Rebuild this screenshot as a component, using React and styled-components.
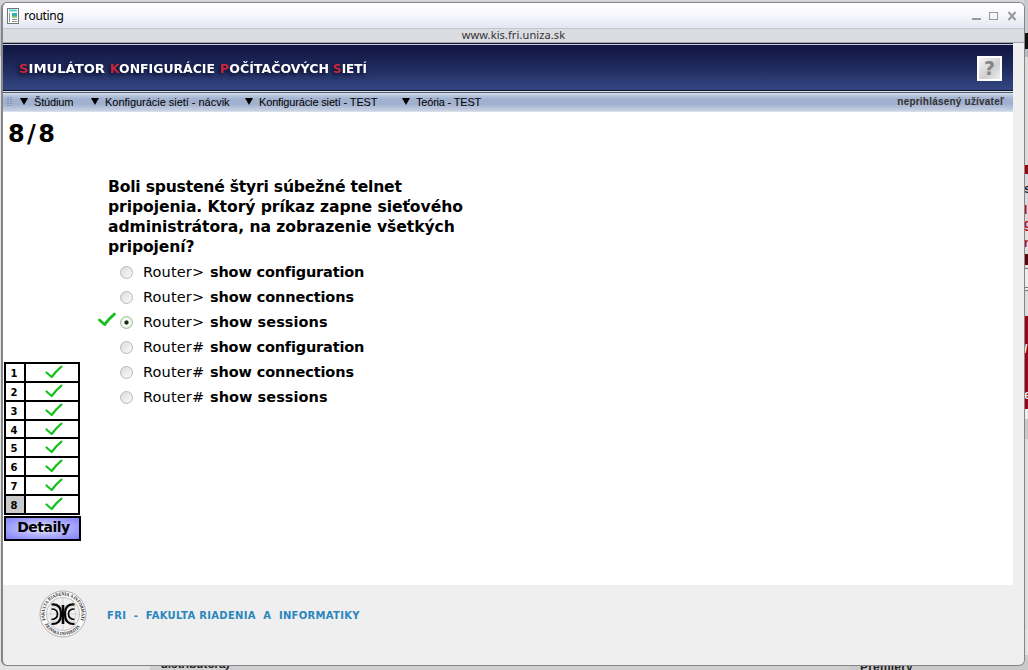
import React from "react";
import styled, { createGlobalStyle } from "styled-components";

const Global = createGlobalStyle`
  * { box-sizing: border-box; }
  html, body { margin: 0; width: 1028px; height: 670px; overflow: hidden; }
  body { background: #c9cace; font-family: "Noto Sans", sans-serif; color: #000; }
`;

const Desktop = styled.div`
  position: relative; width: 1028px; height: 670px; overflow: hidden;
  padding: 2px 3px 4px 1px;
  background: linear-gradient(#d4d5d9 0 4px, #c3c4ca 12px 56px, #e3e3e3 57px);
`;
const BackPage = styled.div`
  position: absolute; right: 0; top: 0; width: 4px; height: 670px; overflow: hidden;
  display: flex; flex-direction: column;
`;
const Strip = styled.div`
  flex: none; height: ${(p) => p.$h}px; background: ${(p) => p.$bg};
  color: ${(p) => p.$fg || "#000"}; font: bold 12px/${(p) => p.$h}px "Liberation Sans", sans-serif;
  overflow: hidden; white-space: nowrap;
`;
const BackFoot = styled.div`
  position: absolute; left: 0; right: 0; bottom: 0; height: 15px; overflow: hidden;
  display: flex; background: #cfcfcf;
`;
const FootText = styled.div`
  width: ${(p) => p.$w}px; flex: none; padding-left: ${(p) => p.$pad}px; background: ${(p) => p.$bg};
  font: ${(p) => p.$style} bold 12px/15px "Liberation Sans", sans-serif; color: #222;
  padding-top: ${(p) => p.$top}px; letter-spacing: ${(p) => p.$ls}px; white-space: nowrap;
`;

const Window = styled.div`
  position: relative; width: 1024px; height: 664px;
  display: flex; flex-direction: column; overflow: hidden;
  border: 1px solid #84868a; border-left-width: 2px; border-radius: 6px;
  background: #efefef;
`;
const TitleBar = styled.header`
  height: 26px; flex: none; display: flex; align-items: center; padding: 0 7px 0 4px;
  background: linear-gradient(#fff 0, #f8f8fc 45%, #e3e6f3 100%);
  font-size: 12px; border-bottom: 1px solid #c5c7cf;
`;
const WindowTitle = styled.span`
  flex: 1; margin-left: 5px; letter-spacing: -0.3px; line-height: 16px;
`;
const Controls = styled.svg` width: 46px; height: 16px; display: block; `;
const AddressBar = styled.div`
  height: 14px; flex: none; background: #dadce2; text-align: center;
  font-size: 11px; line-height: 12px; letter-spacing: 0.1px; color: #333;
  border-bottom: 1px solid #a5a7ae;
`;
const Body = styled.div`
  flex: 1; min-height: 0; display: flex; flex-direction: column; width: 1010px;
`;
const Banner = styled.div`
  height: 48px; flex: none; display: flex; align-items: center; justify-content: space-between;
  padding: 0 11px 0 10px;
  border-top: 1px solid #15182c; border-bottom: 1px solid #0d1020;
  background: linear-gradient(#c8ccdc 0 1px, #101540 1px, #1d2759 45%, #344783 100%);
`;
const Logo = styled.svg`
  width: 370px; height: 30px; display: block; margin-top: 2px;
  font-family: "DejaVu Sans", sans-serif; font-weight: bold; font-size: 11.6px;
  filter: drop-shadow(-2px 2px 2px #060924);
`;
const HelpButton = styled.button`
  width: 25px; height: 25px; padding: 0; margin-top: 2px; border: 2px solid #fff;
  background: linear-gradient(135deg, #f4f4f4, #cfcfcf 60%, #f0f0f0); color: #858585;
  font: bold 19px/20px "DejaVu Sans", sans-serif; text-align: center;
`;
const MenuBar = styled.nav`
  height: 21px; flex: none; display: flex; align-items: center; padding: 1px 9px 0 4px;
  border-bottom: 1px solid #d9dfea;
  background: linear-gradient(#dfe5f0 0 1px, #50596f 1px 2px, #d2dbea 2px 3px, #bccae0 4px, #a1b0ce 8px, #a1b0ce 13px, #c9d3e5 20px);
  font: 11px/16px "Liberation Sans", sans-serif;
`;
const Grip = styled.svg`
  width: 5px; height: 10px; margin-right: 8px; flex: none;
`;
const MenuItem = styled.span`
  display: flex; align-items: center; width: ${(p) => p.$w}px; white-space: nowrap;
  letter-spacing: ${(p) => p.$ls || 0}px;
  &::before {
    content: ""; margin-right: 6px; border: 4px solid transparent;
    border-top: 7px solid #000; border-bottom: 0;
  }
`;
const User = styled.span`
  margin-left: auto; font-weight: bold; font-size: 10px; letter-spacing: 0.21px; color: #333;
`;
const Quiz = styled.main`
  height: 473px; flex: none; background: #fff; padding: 9px 0 0 1px;
`;
const Counter = styled.h1`
  margin: 0 0 0 4px; height: 56px; font: bold 24px/26px "DejaVu Sans", sans-serif; letter-spacing: 2.4px;
`;
const Question = styled.h2`
  margin: 0 0 0 104px; width: 380px; font: bold 15.6px/20px "DejaVu Sans", sans-serif;
`;
const QuestionLine = styled.span`
  display: block; letter-spacing: ${(p) => p.$ls}px; white-space: nowrap;
`;
const Options = styled.ul`
  list-style: none; margin: 2px 0 0 94px; padding: 0; height: 103px;
`;
const Option = styled.li`
  height: 25px; display: flex; align-items: center; font: 14.5px/20px "DejaVu Sans", sans-serif; white-space: pre;
`;
const Mark = styled.span` width: 22px; height: 19px; flex: none; `;
const Radio = styled.span`
  width: 13px; height: 13px; flex: none; margin: 1px 10px 0 0; border-radius: 50%;
  border: 1px solid ${(p) => (p.$on ? "#9ac092" : "#b8b8b8")};
  background: ${(p) => (p.$on
    ? "radial-gradient(circle, #1d261b 0 1.6px, #fff 2.6px, #e5efe2 5px)"
    : "linear-gradient(135deg, #dcdcdc, #fafafa)")};
`;
const Command = styled.span` width: 67px; letter-spacing: 0.15px; `;
const Strong = styled.b` letter-spacing: ${(p) => p.$ls}px; `;
const Score = styled.div`
  width: 76px; border: 2px solid #000; border-bottom-width: 0; display: grid;
`;
const ScoreRow = styled.div`
  display: grid; grid-template-columns: 20px 1fr; grid-template-rows: 100%; height: ${(p) => p.$h}px;
  border-bottom: 2px solid #000;
  font: bold 10px/17px "DejaVu Sans", sans-serif;
`;
const Num = styled.span`
  border-right: 2px solid #000; text-align: center; padding: 1px 2px 0 0;
  background: ${(p) => (p.$on ? "#cacaca" : "#fff")};
`;
const Cell = styled.span` display: flex; justify-content: center; align-items: flex-start; padding: 1px 0 0 3px; `;
const Tick = styled.svg` display: block; overflow: visible; `;
const Details = styled.button`
  display: block; width: 77px; height: 25px; margin-top: 1px; padding: 0 0 3px 2px; border: 2px solid #000;
  background: radial-gradient(ellipse at center, #f0f0ff 0, #b4b4fc 45%, #8080fa 100%);
  font: bold 14px/18px "DejaVu Sans", sans-serif; letter-spacing: -0.5px; color: #000;
`;
const Footer = styled.footer`
  flex: 1; display: flex; align-items: flex-start; padding: 5px 0 0 36px;
`;
const Seal = styled.svg` width: 48px; height: 48px; display: block; flex: none; `;
const Faculty = styled.span`
  margin: 18px 0 0 20px; color: #2a86bd; font: bold 10px/16px "DejaVu Sans", sans-serif;
  letter-spacing: 0.3px; white-space: pre;
`;

const Check = ({ w, h, s }) => (
  <Tick width={w} height={h} viewBox="0 0 18 14">
    <path d="M1.500 7.500L6.700 12Q11 6 16.400 1.600" fill="none" stroke="#16c01e" strokeWidth={s} strokeLinecap="round" strokeLinejoin="round" />
  </Tick>
);

const LOGO = [
  [6, 86, "S", "IMULÁTOR"],
  [97, 105, "K", "ONFIGURÁCIE"],
  [207, 109, "P", "OČÍTAČOVÝCH"],
  [320, 34, "S", "IETÍ"],
];
const OPTIONS = [
  ["Router>", "configuration", -0.18], ["Router>", "connections", -0.12], ["Router>", "sessions", 0.05],
  ["Router#", "configuration", -0.18], ["Router#", "connections", -0.12], ["Router#", "sessions", 0.05],
];
const ROWS = [19, 19, 19, 18, 19, 19, 19, 19];

export default function App() {
  return (
    <Desktop>
      <Global />
      <BackPage>
        <Strip $h={33} $bg="#c9cacf" />
        <Strip $h={16} $bg="#111" />
        <Strip $h={8} $bg="#b9bac0" />
        <Strip $h={108} $bg="#dcdcdc" />
        <Strip $h={9} $bg="#990812" />
        <Strip $h={30} $bg="#d9d9de" $fg="#223">s</Strip>
        <Strip $h={12} $bg="#e2d6d6" $fg="#b01010">l</Strip>
        <Strip $h={16} $bg="#e6d2d6" $fg="#b01020">g</Strip>
        <Strip $h={22} $bg="#e2dede" $fg="#b01020">n</Strip>
        <Strip $h={11} $bg="#5c0508" />
        <Strip $h={3} $bg="#ddd" />
        <Strip $h={1} $bg="#777" />
        <Strip $h={18} $bg="#ededed" />
        <Strip $h={1} $bg="#777" />
        <Strip $h={2} $bg="#eee" />
        <Strip $h={1} $bg="#777" />
        <Strip $h={25} $bg="#ddd" />
        <Strip $h={66} $bg="#9c0418" $fg="#fff">/</Strip>
        <Strip $h={27} $bg="#9c0418" $fg="#eee">ej</Strip>
        <Strip $h={10} $bg="#eee" />
        <Strip $h={20} $bg="#c9c9c9" />
        <Strip $h={190} $bg="#dedede" />
      </BackPage>
      <BackFoot>
        <FootText $w={150} $bg="#e2e2e2" />
        <FootText $w={700} $pad={11} $top={2} $ls={-0.15} $bg="#cecece" $style="italic">distribútora)</FootText>
        <FootText $w={178} $pad={10} $top={5} $ls={0.2} $bg="#c9c9c9" $style="normal">Premiéry</FootText>
      </BackFoot>
      <Window>
        <TitleBar>
          <svg width="12" height="16" viewBox="0 0 12 16">
            <rect x=".5" y=".5" width="11" height="15" fill="#fff" stroke="#6e7a7a" />
            <path d="M2 2.5h8" stroke="#57cbd0" strokeWidth="2" />
            <path d="M2.5 5v9M5 11.5h5M5 13.5h5" stroke="#8b9595" />
            <rect x="5" y="5" width="5" height="4.5" fill="#35aeb0" />
            <path d="M5 8.5h5" stroke="#7fc838" />
          </svg>
          <WindowTitle>routing</WindowTitle>
          <Controls viewBox="0 0 46 16" fill="none" stroke="#96989d">
            <path d="M1 11h9" strokeWidth="2" />
            <rect x="18.5" y="4.5" width="8" height="7" />
            <path d="M37.500 4l7 8M44.500 4l-7 8" strokeWidth="2" />
          </Controls>
        </TitleBar>
        <AddressBar>www.kis.fri.uniza.sk</AddressBar>
        <Body>
          <Banner>
            <Logo viewBox="0 0 370 30">
              {LOGO.map(([x, w, first, rest]) => (
                <text key={x} x={x} y="20" textLength={w} lengthAdjust="spacingAndGlyphs" fill="#fff">
                  <tspan fill="#c9263a">{first}</tspan>{rest}
                </text>
              ))}
            </Logo>
            <HelpButton>?</HelpButton>
          </Banner>
          <MenuBar>
            <Grip viewBox="0 0 5 10">
              <path d="M1 0v10M4 0v10" stroke="#66779c" strokeDasharray="1 1" fill="none" />
            </Grip>
            <MenuItem $w={71} $ls={-0.15}>Štúdium</MenuItem>
            <MenuItem $w={154} $ls={-0.03}>Konfigurácie sietí - nácvik</MenuItem>
            <MenuItem $w={157} $ls={-0.15}>Konfigurácie sietí - TEST</MenuItem>
            <MenuItem $w={120} $ls={-0.2}>Teória - TEST</MenuItem>
            <User>neprihlásený užívateľ</User>
          </MenuBar>
          <Quiz>
            <Counter>8/8</Counter>
            <Question>
              <QuestionLine $ls={-0.21}>Boli spustené štyri súbežné telnet</QuestionLine>
              <QuestionLine $ls={-0.06}>pripojenia. Ktorý príkaz zapne sieťového</QuestionLine>
              <QuestionLine $ls={-0.06}>administrátora, na zobrazenie všetkých</QuestionLine>
              <QuestionLine $ls={-0.1}>pripojení?</QuestionLine>
            </Question>
            <Options>
              {OPTIONS.map(([prompt, word, ls], i) => (
                <Option key={i}>
                  <Mark>{i === 2 && <Check w={18} h={15} s={2.9} />}</Mark>
                  <Radio $on={i === 2} />
                  <Command>{prompt}</Command>
                  <Strong $ls={ls}>show {word}</Strong>
                </Option>
              ))}
            </Options>
            <Score>
              {ROWS.map((h, i) => (
                <ScoreRow key={i} $h={h}>
                  <Num $on={i === 7}>{i + 1}</Num>
                  <Cell><Check w={18} h={14} s={2.2} /></Cell>
                </ScoreRow>
              ))}
            </Score>
            <Details>Detaily</Details>
          </Quiz>
          <Footer>
            <Seal viewBox="0 0 48 48">
              <defs>
                <path id="ringTop" d="M6.500 30 A18.500 18.500 0 1 1 41.500 30" />
                <path id="ringBottom" d="M5 33.500 A21.300 21.300 0 0 0 43 33.500" />
              </defs>
              <circle cx="24" cy="24" r="23" fill="#fafafa" stroke="#b0b0b0" />
              <circle cx="24" cy="24" r="16.5" fill="#f1f1f1" stroke="#aaa" strokeWidth=".7" />
              <path d="M24 8v32M8 24h32M11 15q13 7 26 0M11 33q13-7 26 0M15 11q-7 13 0 26M33 11q7 13 0 26" fill="none" stroke="#c4c4c4" strokeWidth=".6" />
              <g fontFamily="Liberation Serif, serif" fontWeight="bold" fontSize="4.8" fill="#222">
                <text><textPath href="#ringTop" textLength="76" lengthAdjust="spacingAndGlyphs">FAKULTA RIADENIA A INFORMATIKY</textPath></text>
                <text><textPath href="#ringBottom" startOffset="1" textLength="42" lengthAdjust="spacingAndGlyphs">ŽILINSKÁ UNIVERZITA</textPath></text>
              </g>
              <g fill="none" stroke="#080808">
                <path d="M12.500 14.500Q22 13.500 22 24T12.500 34M35.500 14.500Q26 13.500 26 24T35.500 34" strokeWidth="2.200" />
                <path d="M12.500 19Q18.500 19 18.500 24T12.500 29.500M35.500 19Q29.500 19 29.500 24T35.500 29.500" strokeWidth="1.700" />
                <path d="M24 15v19" strokeWidth="2.600" />
              </g>
            </Seal>
            <Faculty>FRI  -  FAKULTA RIADENIA  A  INFORMATIKY</Faculty>
          </Footer>
        </Body>
      </Window>
    </Desktop>
  );
}
